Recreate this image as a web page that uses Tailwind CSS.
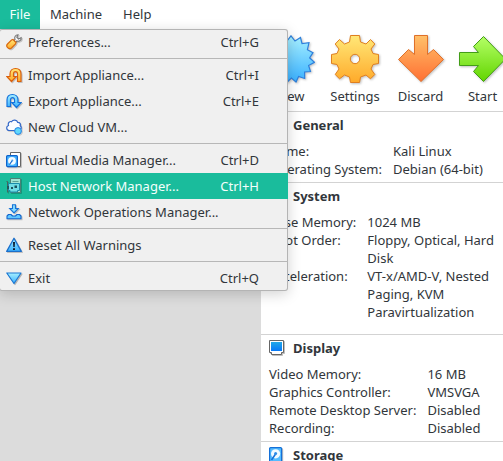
<!DOCTYPE html>
<html lang="en">
<head>
<meta charset="utf-8">
<meta name="viewport" content="width=device-width, initial-scale=1">
<title>VirtualBox Manager</title>
<script src="https://cdn.jsdelivr.net/npm/@tailwindcss/browser@4"></script>
</head>
<body class="h-screen overflow-hidden flex flex-col bg-white font-['Noto_Sans',sans-serif] text-[13px] leading-[18px] text-[#31363b]">
<svg class="absolute size-0" aria-hidden="true">
  <defs>
    <linearGradient id="blue" x1="0" y1="0" x2="0" y2="1"><stop offset="0" stop-color="#a8f0ff"/><stop offset="1" stop-color="#38b0ff"/></linearGradient>
    <linearGradient id="gold" x1="0" y1="0" x2="0" y2="1"><stop offset="0" stop-color="#ffe878"/><stop offset="1" stop-color="#ffaa2a"/></linearGradient>
    <linearGradient id="orange" x1="0" y1="0" x2="0" y2="1"><stop offset="0" stop-color="#ffc069"/><stop offset="1" stop-color="#ff7033"/></linearGradient>
    <linearGradient id="green" x1="0" y1="0" x2="0" y2="1"><stop offset="0" stop-color="#b4ff66"/><stop offset="1" stop-color="#62d500"/></linearGradient>
    <linearGradient id="screen" x1="0" y1="0" x2="0" y2="1"><stop offset="0" stop-color="#22a8e8"/><stop offset="1" stop-color="#0878f8"/></linearGradient>
  </defs>
</svg>

<header class="relative z-10 flex h-[29px] shrink-0">
  <button class="w-10 bg-[#1abc9c] pb-[2px] text-[#f4fffc]" aria-expanded="true">File</button>
  <button class="px-[10px] pb-[2px]">Machine</button>
  <button class="px-[11px] pb-[2px]">Help</button>

  <div role="menu" aria-label="File" class="absolute -left-px top-full w-[289px] overflow-hidden rounded-[3px] bg-[#f0f0f0] inset-ring inset-ring-[#b4b4b4] shadow-[0_3px_14px_rgba(0,0,0,0.18)]">
    <button role="menuitem" class="flex h-[26px] w-full items-center pl-[7px] pr-[29px]">
      <svg class="mr-[6px] size-4 drop-shadow-[1px_1px_0_rgba(0,0,0,0.2)]" viewBox="0 0 16 16"><path d="M7.5 7 9 5.5C8 3 9.500.8 12 .8L10.800 3.200 12.500 5 15.200 3.600C15.500 6.500 13 7.700 11 7L9.300 8.700Z" fill="#f7f7f7" stroke="#777" stroke-width="1.100"/><path d="M7 5.500 10 8.500 9.500 10 5.500 14C3 16-.8 12.500 1.500 10L5.500 6Z" fill="url(#gold)" stroke="#d96a10" stroke-width="1.200"/></svg>
      <span>Preferences...</span><kbd class="ml-auto font-[inherit]">Ctrl+G</kbd>
    </button>
    <hr class="my-[3px] border-[#b7b7b7]">
    <button role="menuitem" class="flex h-[26px] w-full items-center pl-[7px] pr-[29px]">
      <svg class="mr-[6px] size-4 drop-shadow-[1px_1px_0_rgba(0,0,0,0.2)]" viewBox="0 0 16 16"><path d="M15 14.500V7C15 3 12.500 1.500 9.500 1.500S4 3.500 4 7V9.500H.8L5.500 14.500 10.200 9.500H7.500V7C7.500 5 8.500 4.700 9.500 4.700S11.500 5.500 11.500 7V14.500Z" fill="url(#gold)" stroke="#dc600c" stroke-width="1.200"/></svg>
      <span>Import Appliance...</span><kbd class="ml-auto font-[inherit]">Ctrl+I</kbd>
    </button>
    <button role="menuitem" class="flex h-[26px] w-full items-center pl-[7px] pr-[29px]">
      <svg class="mr-[6px] size-4 drop-shadow-[1px_1px_0_rgba(0,0,0,0.2)]" viewBox="0 0 16 16"><path d="M1 13.500V7C1 3 3.500 1.500 6.500 1.500S12 3.500 12 7V9.500H15.200L10.500 14.500 5.800 9.500H8.500V7C8.500 5 7.500 4.700 6.500 4.700S4.500 5.500 4.500 7V13.500Z" fill="url(#blue)" stroke="#1473dc" stroke-width="1.200"/></svg>
      <span>Export Appliance...</span><kbd class="ml-auto font-[inherit]">Ctrl+E</kbd>
    </button>
    <button role="menuitem" class="flex h-[26px] w-full items-center pl-[7px] pr-[29px]">
      <svg class="mr-[6px] size-4 drop-shadow-[1px_1px_0_rgba(0,0,0,0.15)]" viewBox="0 0 16 16"><path d="M3.500 11.500C.2 11.500-.2 7.500 2.500 6.500 1.500 3.500 4 2 5.500 2.700 7 .3 11 .6 11.700 3.300 14 3.200 14.800 5 14.200 6.500 16.500 9 14.500 11.500 12 11.500Z" fill="#fafdff" stroke="#3468c8" stroke-width="1.200"/><circle cx="12" cy="12" r="3.400" fill="#62d8fb" stroke="#2080e4"/></svg>
      <span>New Cloud VM...</span>
    </button>
    <hr class="my-[3px] border-[#b7b7b7]">
    <button role="menuitem" class="flex h-[26px] w-full items-center pl-[7px] pr-[29px]">
      <svg class="mr-[6px] size-4 drop-shadow-[1px_1px_0_rgba(0,0,0,0.2)]" viewBox="0 0 16 16"><path d="M4.500.5H14.500V14.500H4.500Z" fill="#fff" stroke="#666"/><rect x=".6" y="3.600" width="10.800" height="11" rx="1" fill="#46b4ff" stroke="#0c62cc" stroke-width="1.200"/><circle cx="6" cy="8.800" r="3.900" fill="#f4fbff"/><path d="M6 9 3.500 12.500" stroke="#0c62cc" stroke-width="1.200"/><circle cx="6.300" cy="8.500" r="1" fill="#4a9be6"/></svg>
      <span>Virtual Media Manager...</span><kbd class="ml-auto font-[inherit]">Ctrl+D</kbd>
    </button>
    <button role="menuitem" class="flex h-[26px] w-full items-center bg-[#1abc9c] pl-[7px] pr-[29px] text-[#f4fffc]">
      <svg class="mr-[6px] size-4 drop-shadow-[1px_1px_0_rgba(0,0,0,0.2)]" viewBox="0 0 16 16"><path d="M4.500.5H14.500V14.500H4.500Z" fill="#9fe4d4" stroke="#4b8177"/><path d="M6.500 3.500H12.500" stroke="#5aa095"/><path d="M.5 3.500H1.500V14.500" fill="none" stroke="#45655f"/><path d="M2.500 5.500H13.500V12.500H11.500V14H4V12.500H2.500Z" fill="#6fdce4" stroke="#1a8cab"/><path d="M5 9H7V11H5ZM8.500 7.500H11V10H8.500Z" fill="#19535d"/><path d="M1 8H3V11H1Z" fill="#21575b"/></svg>
      <span>Host Network Manager...</span><kbd class="ml-auto font-[inherit]">Ctrl+H</kbd>
    </button>
    <button role="menuitem" class="flex h-[26px] w-full items-center pl-[7px] pr-[29px]">
      <svg class="mr-[6px] size-4 drop-shadow-[1px_1px_0_rgba(0,0,0,0.2)]" viewBox="0 0 16 16"><path d="M6.500.7H9.500V4.500H12.300L8 9 3.700 4.500H6.500Z" fill="#86dcff" stroke="#1673d8" stroke-width="1.100"/><path d="M2.500 10.500H5L6.500 12H9.500L11 10.500H13.500L15 12V14.700H1V12Z" fill="#62c8ff" stroke="#1266ce" stroke-width="1.100" stroke-linejoin="round"/></svg>
      <span>Network Operations Manager...</span>
    </button>
    <hr class="my-[3px] border-[#b7b7b7]">
    <button role="menuitem" class="flex h-[26px] w-full items-center pl-[7px] pr-[29px]">
      <svg class="mr-[6px] size-4 drop-shadow-[1px_1px_0_rgba(0,0,0,0.2)]" viewBox="0 0 16 16"><path d="M8 1.200 15.300 14.400H.7Z" fill="url(#blue)" stroke="#1b6fcb" stroke-width="1.300" stroke-linejoin="round"/><path d="M7 5H9L8.700 10H7.300ZM7 11.200H9V13H7Z" fill="#0c1c30"/></svg>
      <span>Reset All Warnings</span>
    </button>
    <hr class="my-[3px] border-[#b7b7b7]">
    <button role="menuitem" class="flex h-[26px] w-full items-center pl-[7px] pr-[29px]">
      <svg class="mr-[6px] size-4 drop-shadow-[1px_1px_0_rgba(0,0,0,0.25)]" viewBox="0 0 16 16"><path d="M.8 3H15L8 13.500Z" fill="url(#blue)" stroke="#1b78d4" stroke-width="1.200" stroke-linejoin="round"/></svg>
      <span>Exit</span><kbd class="ml-auto font-[inherit]">Ctrl+Q</kbd>
    </button>
  </div>
</header>

<div class="flex min-h-0 flex-1">
  <aside class="w-[261px] shrink-0 bg-[#dcdcdc]"></aside>
  <main class="min-w-0 flex-1 overflow-hidden">
    <div role="toolbar" class="flex h-[82px] pt-[6px]">
      <button class="flex w-[60px] shrink-0 flex-col items-center gap-1">
        <svg class="size-12 drop-shadow-[1px_1px_1px_rgba(0,0,0,0.25)]" viewBox="0 0 48 48"><path d="M24 .8 28 6 33.500 2.500 35 8.500 42 7.700 40.400 14.700 46 17.700 42.600 22.800 47.500 27.300 41.600 30.500 43.500 36.500 37.600 37 37.700 43.500 31.600 41.400 29 47 24.400 43 20 47.300 17 41.500 11.500 44.500 10 37.500 4.500 37 6.500 30.500.7 28 5.400 23 1 18 7.500 15 6 8.500 13 8.500 14 2.500 20 6Z" fill="url(#blue)" stroke="#2f80dc" stroke-width="1.200"/></svg>
        <span>New</span>
      </button>
      <button class="flex w-[68px] shrink-0 flex-col items-center gap-1">
        <svg class="size-12 drop-shadow-[1px_1px_1px_rgba(0,0,0,0.25)]" viewBox="0 0 48 48"><path fill-rule="evenodd" d="M19.500.5H28.500L29.500 7 35 9 39.500 4.500 43.800 9 40 14 42 18.500 47.500 19.500V28.500L42 29.500 40 34 43.800 39.500 39.500 43.800 35 40 29.500 42 28.500 47.500H19.500L18.500 42 13.500 40 8.500 43.800 4.200 39.500 8 34 6 29.500.5 28.500V19.500L6 18.500 8 14 4.200 9 8.500 4.500 13.500 9 18.500 7ZM24 19.300A4.700 4.700 0 1 0 24 28.700 4.700 4.700 0 1 0 24 19.300Z" fill="url(#gold)" stroke="#df7f20"/></svg>
        <span>Settings</span>
      </button>
      <button class="flex w-[63px] shrink-0 flex-col items-center gap-1">
        <svg class="size-12 drop-shadow-[1px_1px_1px_rgba(0,0,0,0.25)]" viewBox="0 0 48 48"><path d="M17.500.5H30.500V19.500L36.500 14.500 46.500 24.500 24 46.500 1.500 24.500 11.500 14.500 17.500 19.500Z" fill="url(#orange)" stroke="#df702a"/></svg>
        <span>Discard</span>
      </button>
      <button class="flex w-[61px] shrink-0 flex-col items-center gap-1">
        <svg class="size-12 drop-shadow-[1px_1px_1px_rgba(0,0,0,0.25)]" viewBox="0 0 48 48"><path d="M.5 17.500H19.500L14.500 11.500 24.500 1.500 46.500 24 24.500 46.500 14.500 36.500 19.500 30.500H.5Z" fill="url(#green)" stroke="#439d18"/></svg>
        <span>Start</span>
      </button>
    </div>

    <section class="border-t border-[#d3d3d3] px-2 pb-1">
      <h2 class="mb-1 flex h-[26px] items-center gap-2 font-bold">
        <svg class="size-4" viewBox="0 0 16 16"><rect x="1" y="1" width="14" height="12" fill="url(#screen)" stroke="#666"/></svg>General
      </h2>
      <table class="text-left">
        <tr><th class="pr-[11px] align-top font-normal whitespace-nowrap">Name:</th><td>Kali Linux</td></tr>
        <tr><th class="pr-[11px] align-top font-normal whitespace-nowrap">Operating System:</th><td>Debian (64-bit)</td></tr>
      </table>
    </section>

    <section class="border-t border-[#d3d3d3] px-2 pb-[13px]">
      <h2 class="mb-1 flex h-[26px] items-center gap-2 font-bold">
        <svg class="size-4" viewBox="0 0 16 16"><rect x="2" y="2" width="12" height="12" fill="url(#green)" stroke="#439d18"/></svg>System
      </h2>
      <table class="text-left">
        <tr><th class="pr-[11px] align-top font-normal whitespace-nowrap">Base Memory:</th><td>1024 MB</td></tr>
        <tr><th class="pr-[11px] align-top font-normal whitespace-nowrap">Boot Order:</th><td>Floppy, Optical, Hard Disk</td></tr>
        <tr><th class="pr-[11px] align-top font-normal whitespace-nowrap">Acceleration:</th><td>VT-x/AMD-V, Nested Paging, KVM Paravirtualization</td></tr>
      </table>
    </section>

    <section class="border-t border-[#d3d3d3] px-2 pb-1">
      <h2 class="mb-1 flex h-[26px] items-center gap-2 font-bold">
        <svg class="size-4 drop-shadow-[1px_1px_0_rgba(0,0,0,0.25)]" viewBox="0 0 16 16"><path d="M.5.5H14.500V12.500H12.500V14.500H2.500V12.500H.5Z" fill="#fff" stroke="#666"/><path d="M2 2H13V11H2Z" fill="url(#screen)"/></svg>Display
      </h2>
      <table class="text-left">
        <tr><th class="pr-[11px] align-top font-normal whitespace-nowrap">Video Memory:</th><td>16 MB</td></tr>
        <tr><th class="pr-[11px] align-top font-normal whitespace-nowrap">Graphics Controller:</th><td>VMSVGA</td></tr>
        <tr><th class="pr-[11px] align-top font-normal whitespace-nowrap">Remote Desktop Server:</th><td>Disabled</td></tr>
        <tr><th class="pr-[11px] align-top font-normal whitespace-nowrap">Recording:</th><td>Disabled</td></tr>
      </table>
    </section>

    <section class="border-t border-[#d3d3d3] px-2">
      <h2 class="flex h-[26px] items-center gap-2 font-bold">
        <svg class="size-4 drop-shadow-[1px_1px_0_rgba(0,0,0,0.25)]" viewBox="0 0 16 16"><rect x=".6" y=".6" width="12" height="14.800" rx="1" fill="#55bcff" stroke="#1470d8" stroke-width="1.200"/><circle cx="6.600" cy="6.800" r="4.600" fill="#f2faff"/><path d="M6.600 7 2.500 13" stroke="#1470d8" stroke-width="1.500"/><circle cx="6.600" cy="6.500" r="1.500" fill="#2c8ce8"/></svg>Storage
      </h2>
    </section>
  </main>
</div>
</body>
</html>
